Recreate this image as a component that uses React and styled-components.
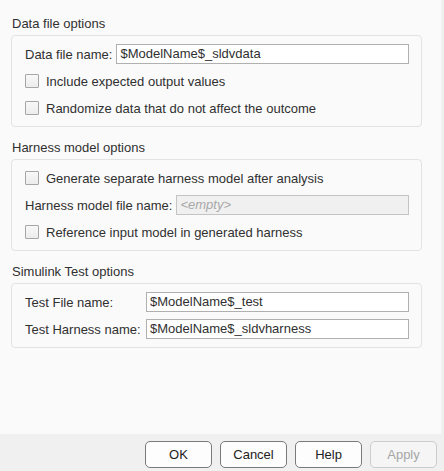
import React from 'react';
import styled, { createGlobalStyle } from 'styled-components';

const GlobalStyle = createGlobalStyle`
  html, body {
    margin: 0;
    padding: 0;
    background: #fafafa;
  }
  body {
    font-family: "Liberation Sans", Arial, sans-serif;
    font-size: 13px;
    color: #303030;
  }
`;

const Window = styled.div`
  width: 444px;
  height: 471px;
  display: flex;
  flex-direction: column;
  overflow: hidden;
`;

const Main = styled.div`
  flex: 1;
  background: #fafafa;
  border-right: 3px solid #f0f0f0;
  padding: 16px 19px 0 11px;
  display: flex;
  flex-direction: column;
`;

const SectionTitle = styled.div`
  line-height: 16px;
  padding-left: 1px;
  margin-top: ${p => (p.first ? 0 : 13)}px;
  margin-bottom: 3px;
`;

const Panel = styled.div`
  border: 1px solid #e3e3e3;
  border-radius: 4px;
  padding: 8px 12px 8px 13px;
  display: flex;
  flex-direction: column;
  gap: 7px;
`;

const Row = styled.div`
  height: 20px;
  display: flex;
  align-items: center;
`;

const Label = styled.span`
  white-space: nowrap;
  width: ${p => (p.width ? `${p.width}px` : 'auto')};
  flex-shrink: 0;
  margin-right: ${p => (p.width ? 0 : 4)}px;
`;

const TextField = styled.div`
  flex: 1;
  height: 20px;
  box-sizing: border-box;
  border: 1px solid ${p => (p.disabled ? '#c4c4c4' : '#b0b0b0')};
  background: ${p => (p.disabled ? '#f0f0f0' : '#ffffff')};
  color: ${p => (p.disabled ? '#a8a8a8' : '#303030')};
  font-style: ${p => (p.disabled ? 'italic' : 'normal')};
  padding: 0 3px;
  line-height: 18px;
  white-space: nowrap;
  overflow: hidden;
`;

const Box = styled.span`
  width: 14px;
  height: 14px;
  box-sizing: border-box;
  border: 1px solid #a6a6a6;
  border-radius: 1px;
  background: linear-gradient(#f8f8f8, #ececec);
  margin-right: 7px;
  flex-shrink: 0;
`;

const Footer = styled.div`
  height: 37px;
  background: #f0f0f0;
  display: flex;
  justify-content: flex-end;
  align-items: flex-start;
  gap: 8px;
  padding: 7px 7px 0 0;
  box-sizing: border-box;
`;

const Button = styled.div`
  width: 67px;
  height: 27px;
  box-sizing: border-box;
  border: 1px solid ${p => (p.disabled ? '#cccccc' : '#7a7a7a')};
  border-radius: 5px;
  background: ${p => (p.disabled ? '#f5f5f5' : '#fdfdfd')};
  color: ${p => (p.disabled ? '#a6a6a6' : '#222222')};
  display: flex;
  align-items: center;
  justify-content: center;
  font-size: 13px;
`;

const Checkbox = ({ children }) => (
  <Row>
    <Box />
    <span>{children}</span>
  </Row>
);

const Field = ({ label, value, width, disabled }) => (
  <Row>
    <Label width={width}>{label}</Label>
    <TextField disabled={disabled}>{value}</TextField>
  </Row>
);

export default function App() {
  return (
    <Window>
      <GlobalStyle />
      <Main>
        <SectionTitle first>Data file options</SectionTitle>
        <Panel>
          <Field label="Data file name:" value="$ModelName$_sldvdata" />
          <Checkbox>Include expected output values</Checkbox>
          <Checkbox>Randomize data that do not affect the outcome</Checkbox>
        </Panel>

        <SectionTitle>Harness model options</SectionTitle>
        <Panel>
          <Checkbox>Generate separate harness model after analysis</Checkbox>
          <Field label="Harness model file name:" value="<empty>" disabled />
          <Checkbox>Reference input model in generated harness</Checkbox>
        </Panel>

        <SectionTitle>Simulink Test options</SectionTitle>
        <Panel>
          <Field label="Test File name:" value="$ModelName$_test" width={121} />
          <Field label="Test Harness name:" value="$ModelName$_sldvharness" width={121} />
        </Panel>
      </Main>
      <Footer>
        <Button>OK</Button>
        <Button>Cancel</Button>
        <Button>Help</Button>
        <Button disabled>Apply</Button>
      </Footer>
    </Window>
  );
}
